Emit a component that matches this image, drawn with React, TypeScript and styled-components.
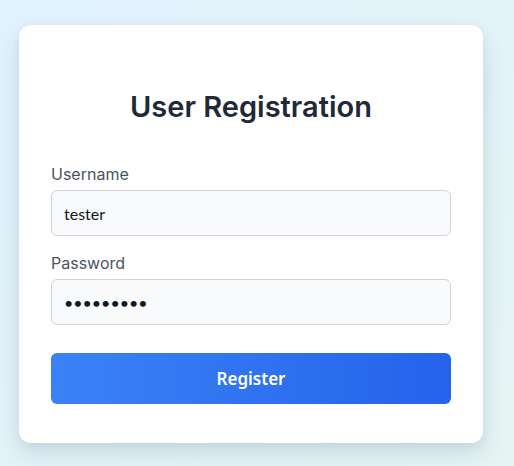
import styled, { createGlobalStyle } from 'styled-components';

const GlobalStyle = createGlobalStyle`
  html, body {
    margin: 0;
    padding: 0;
  }
  body {
    font-family: Inter, "Noto Sans", sans-serif;
    background: linear-gradient(135deg, #e0f2fe 0%, #e6f4f3 100%);
    min-height: 466px;
  }
`;

const Page = styled.div`
  display: flex;
  align-items: flex-start;
  padding: 25px 31px 23px 19px;
`;

const Card = styled.form`
  width: 464px;
  box-sizing: border-box;
  background: #ffffff;
  border-radius: 12px;
  padding: 65px 32px 39px;
  box-shadow: 0 10px 25px rgba(0, 60, 80, 0.12), 0 4px 10px rgba(0, 60, 80, 0.06);
  display: flex;
  flex-direction: column;
`;

const Title = styled.h1`
  margin: 0 0 38px;
  text-align: center;
  font-size: 29px;
  line-height: 34px;
  font-weight: 600;
  color: #1f2937;
`;

const Field = styled.div`
  display: flex;
  flex-direction: column;
  gap: 4px;
  margin-bottom: 15px;
`;

const Label = styled.label`
  font-size: 16px;
  line-height: 24px;
  color: #4b5563;
`;

const Input = styled.input`
  height: 46px;
  box-sizing: border-box;
  padding: 0 12px;
  border: 1px solid #d1d5db;
  border-radius: 6px;
  background: #f9fafb;
  font-family: Lato, sans-serif;
  font-size: 16px;
  color: #111827;
  outline: none;
`;

const Button = styled.button`
  margin-top: 13px;
  height: 51px;
  border: none;
  border-radius: 6px;
  background: linear-gradient(90deg, #3b82f6 0%, #2563eb 100%);
  color: #ffffff;
  font-family: "Noto Sans", sans-serif;
  font-size: 17px;
  font-weight: 600;
  cursor: pointer;
`;

export default function App() {
  return (
    <>
      <GlobalStyle />
      <Page>
        <Card onSubmit={(e) => e.preventDefault()}>
          <Title>User Registration</Title>
          <Field>
            <Label htmlFor="username">Username</Label>
            <Input id="username" type="text" defaultValue="tester" />
          </Field>
          <Field>
            <Label htmlFor="password">Password</Label>
            <Input id="password" type="password" defaultValue="testpass1" />
          </Field>
          <Button type="submit">Register</Button>
        </Card>
      </Page>
    </>
  );
}
